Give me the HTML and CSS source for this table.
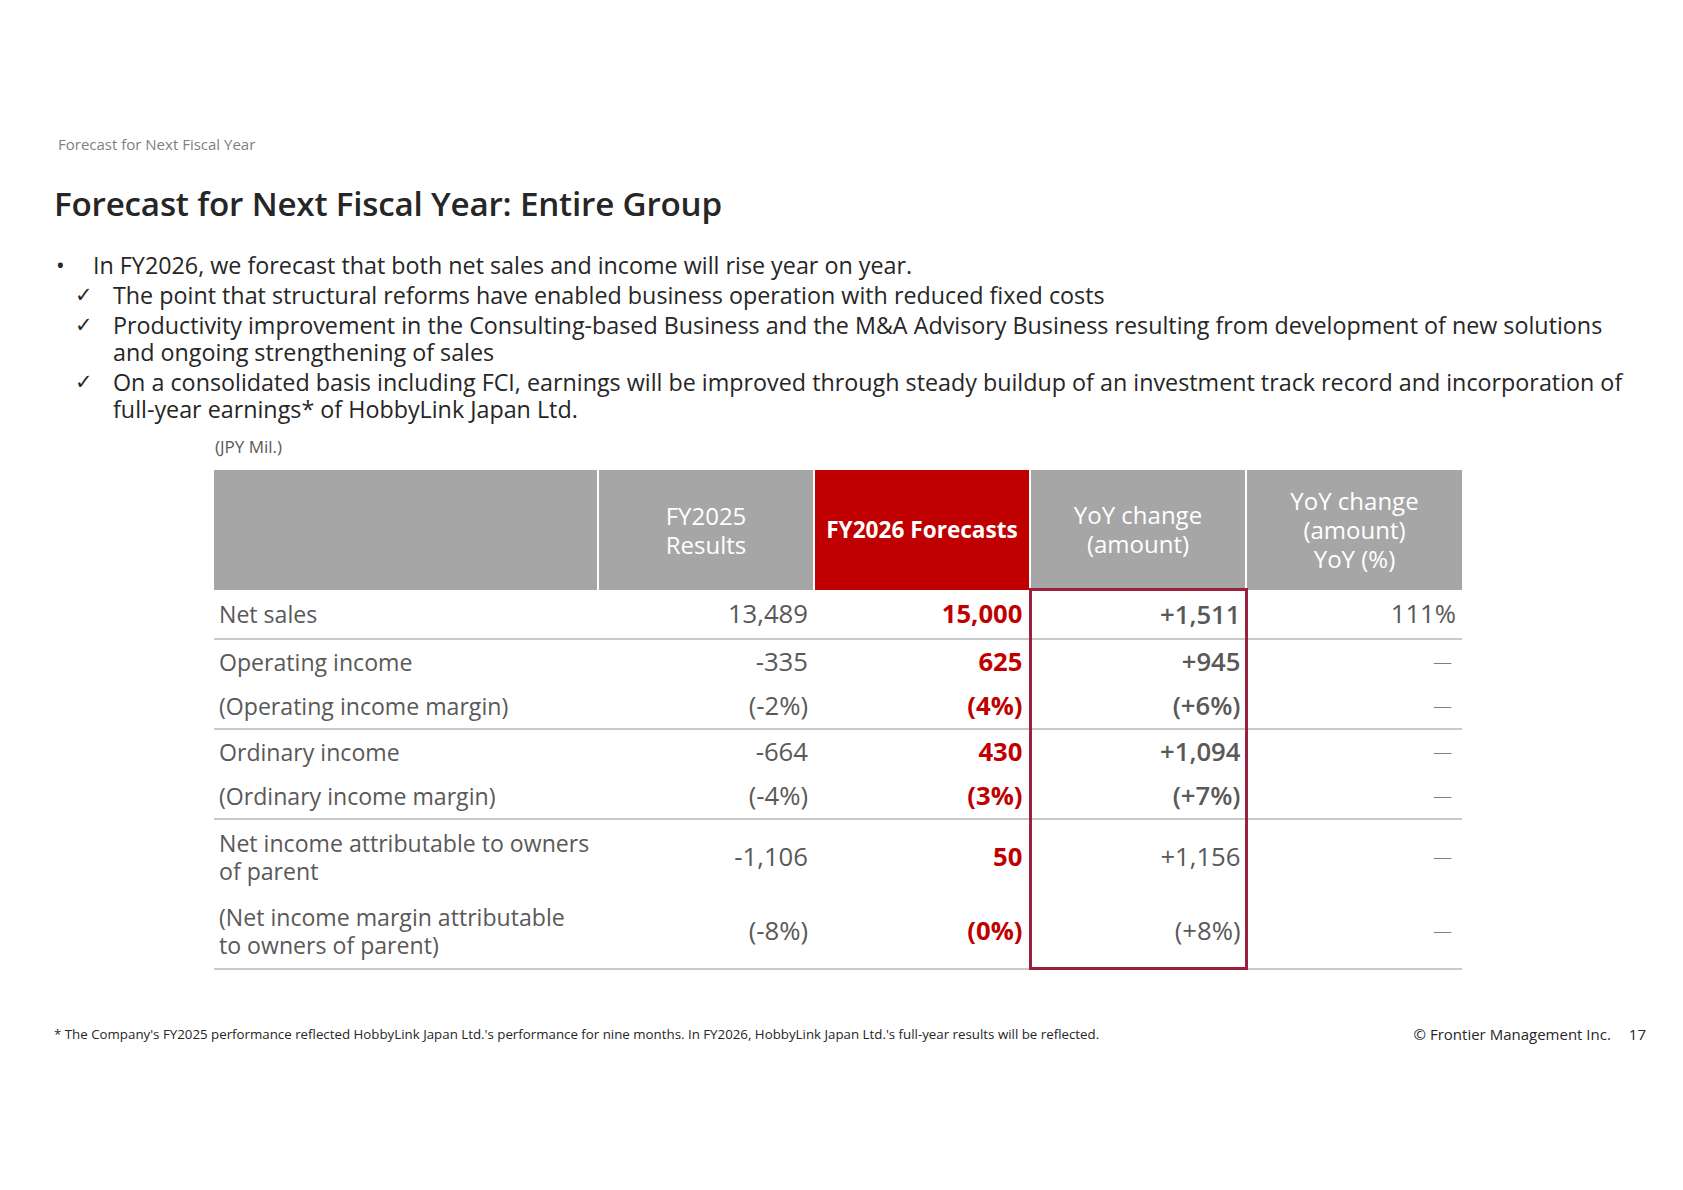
FILE: index.html
```html
<!DOCTYPE html>
<html lang="en">
<head>
    <meta charset="UTF-8">
    <title>Forecast for Next Fiscal Year: Entire Group</title>
    <link rel="stylesheet" href="styles.css">
</head>
<body>
    <div class="slide">
        <div class="breadcrumb">Forecast for Next Fiscal Year</div>
        <h1 class="title">Forecast for Next Fiscal Year: Entire Group</h1>

        <ul class="points">
            <li class="bullet"><span class="mark">•</span><span>In FY2026, we forecast that both net sales and income will rise year on year.</span></li>
            <li class="check"><span class="mark">✓</span><span>The point that structural reforms have enabled business operation with reduced fixed costs</span></li>
            <li class="check"><span class="mark">✓</span><span>Productivity improvement in the Consulting-based Business and the M&amp;A Advisory Business resulting from development of new solutions<br>and ongoing strengthening of sales</span></li>
            <li class="check"><span class="mark">✓</span><span>On a consolidated basis including FCI, earnings will be improved through steady buildup of an investment track record and incorporation of<br>full-year earnings* of HobbyLink Japan Ltd.</span></li>
        </ul>

        <div class="table-wrap">
            <div class="unit">(JPY Mil.)</div>
            <table class="results">
                <colgroup>
                    <col class="col-label">
                    <col class="col-num">
                    <col class="col-num">
                    <col class="col-num">
                    <col class="col-num">
                </colgroup>
                <thead>
                    <tr>
                        <th class="blank"></th>
                        <th>FY2025<br>Results</th>
                        <th class="forecast">FY2026 Forecasts</th>
                        <th>YoY change<br>(amount)</th>
                        <th>YoY change<br>(amount)<br>YoY (%)</th>
                    </tr>
                </thead>
                <tbody>
                    <tr class="row-single first">
                        <td class="label">Net sales</td>
                        <td>13,489</td>
                        <td class="red">15,000</td>
                        <td class="box strong">+1,511</td>
                        <td>111%</td>
                    </tr>
                    <tr class="row-half">
                        <td class="label">Operating income</td>
                        <td>-335</td>
                        <td class="red">625</td>
                        <td class="box strong">+945</td>
                        <td class="dash">—</td>
                    </tr>
                    <tr class="row-half sep">
                        <td class="label">(Operating income margin)</td>
                        <td>(-2%)</td>
                        <td class="red">(4%)</td>
                        <td class="box strong">(+6%)</td>
                        <td class="dash">—</td>
                    </tr>
                    <tr class="row-half">
                        <td class="label">Ordinary income</td>
                        <td>-664</td>
                        <td class="red">430</td>
                        <td class="box strong">+1,094</td>
                        <td class="dash">—</td>
                    </tr>
                    <tr class="row-half sep">
                        <td class="label">(Ordinary income margin)</td>
                        <td>(-4%)</td>
                        <td class="red">(3%)</td>
                        <td class="box strong">(+7%)</td>
                        <td class="dash">—</td>
                    </tr>
                    <tr class="row-double">
                        <td class="label">Net income attributable to owners<br>of parent</td>
                        <td>-1,106</td>
                        <td class="red">50</td>
                        <td class="box">+1,156</td>
                        <td class="dash">—</td>
                    </tr>
                    <tr class="row-double sep last">
                        <td class="label">(Net income margin attributable<br>to owners of parent)</td>
                        <td>(-8%)</td>
                        <td class="red">(0%)</td>
                        <td class="box">(+8%)</td>
                        <td class="dash">—</td>
                    </tr>
                </tbody>
            </table>
        </div>

        <div class="footer">
            <p class="footnote">* The Company's FY2025 performance reflected HobbyLink Japan Ltd.'s performance for nine months. In FY2026, HobbyLink Japan Ltd.'s full-year results will be reflected.</p>
            <div class="copyright">© Frontier Management Inc.</div>
            <div class="page-no">17</div>
        </div>
    </div>
</body>
</html>
```

FILE: styles.css
```css
/* slide base */
body {
    margin: 0;
    padding: 0;
    background: #ffffff;
    font-family: "Open Sans", "Noto Sans", "Liberation Sans", sans-serif;
    color: #262626;
}

.slide {
    width: 1683px;
    height: 1190px;
    box-sizing: border-box;
    padding: 134px 0 0 0;
    display: flex;
    flex-direction: column;
}

/* heading area */
.breadcrumb {
    margin-left: 58px;
    font-size: 15px;
    line-height: 20px;
    color: #7f7f7f;
}
.title {
    margin: 29px 0 0 54px;
    font-size: 33.2px;
    line-height: 42px;
    font-weight: 600;
    color: #262626;
    letter-spacing: -0.2px;
}

/* bullet points */
.points {
    list-style: none;
    margin: 27px 0 0 0;
    padding: 0;
    font-size: 23.3px;
    line-height: 27px;
    color: #262626;
}
.points li {
    display: flex;
    margin-top: 3px;
}
.points li:first-child {
    margin-top: 0;
}
.points .mark {
    flex: none;
}
.bullet {
    padding-left: 56px;
}
.bullet .mark {
    width: 37px;
}
.check {
    padding-left: 75px;
}
.check .mark {
    width: 38px;
    font-family: "DejaVu Sans", sans-serif;
    font-size: 21px;
}

/* table */
.table-wrap {
    margin: 12px 0 0 214px;
}
.unit {
    margin-left: 1px;
    font-size: 17px;
    line-height: 24px;
    color: #595959;
}
.results {
    margin-top: 11px;
    width: 1248px;
    border-collapse: collapse;
    table-layout: fixed;
    color: #595959;
}
.col-label {
    width: 384px;
}
.col-num {
    width: 216px;
}
.results th {
    height: 118px;
    padding: 0;
    background: #a6a6a6;
    color: #ffffff;
    font-weight: 400;
    font-size: 24px;
    line-height: 29px;
    text-align: center;
    border-left: 2px solid #ffffff;
}
.results th.blank {
    border-left: none;
}
.results th.forecast {
    background: #c00000;
    font-weight: 700;
    font-size: 22.6px;
}
.results td {
    padding: 0 6px 0 4px;
    text-align: right;
    font-size: 25.7px;
    line-height: 28px;
}
.results td.label {
    text-align: left;
    font-size: 23.1px;
    padding-left: 5px;
}
.results td.red {
    color: #c00000;
    font-weight: 700;
}
.results td.strong {
    font-weight: 600;
}
.results td.dash {
    font-size: 19px;
    font-weight: 300;
    color: #7f7f7f;
    padding-right: 10px;
}
.row-single td {
    height: 47px;
    border-bottom: 2px solid #c9c9c9;
}
.row-half td {
    height: 44px;
}
.row-half.sep td {
    border-bottom: 2px solid #c9c9c9;
}
.row-double td {
    height: 74px;
}
.row-double.sep td {
    height: 73px;
    border-bottom: 2px solid #c9c9c9;
}

/* highlight box on the YoY amount column */
.results td.box {
    border-left: 3px solid #98213f;
    border-right: 3px solid #98213f;
    padding-right: 4px;
}
.results tr.first td.box {
    border-top: 3px solid #98213f;
}
.results tr.last td.box {
    border-bottom: 3px solid #98213f;
}

/* footer */
.footer {
    margin-top: auto;
    margin-bottom: 146px;
    display: flex;
    align-items: center;
}
.footnote {
    margin: 0 0 0 54px;
    font-size: 13.3px;
    color: #262626;
    flex: 1;
}
.copyright {
    font-size: 15px;
    color: #262626;
    margin-right: 18px;
}
.page-no {
    font-size: 15px;
    color: #262626;
    margin-right: 37px;
}
```
